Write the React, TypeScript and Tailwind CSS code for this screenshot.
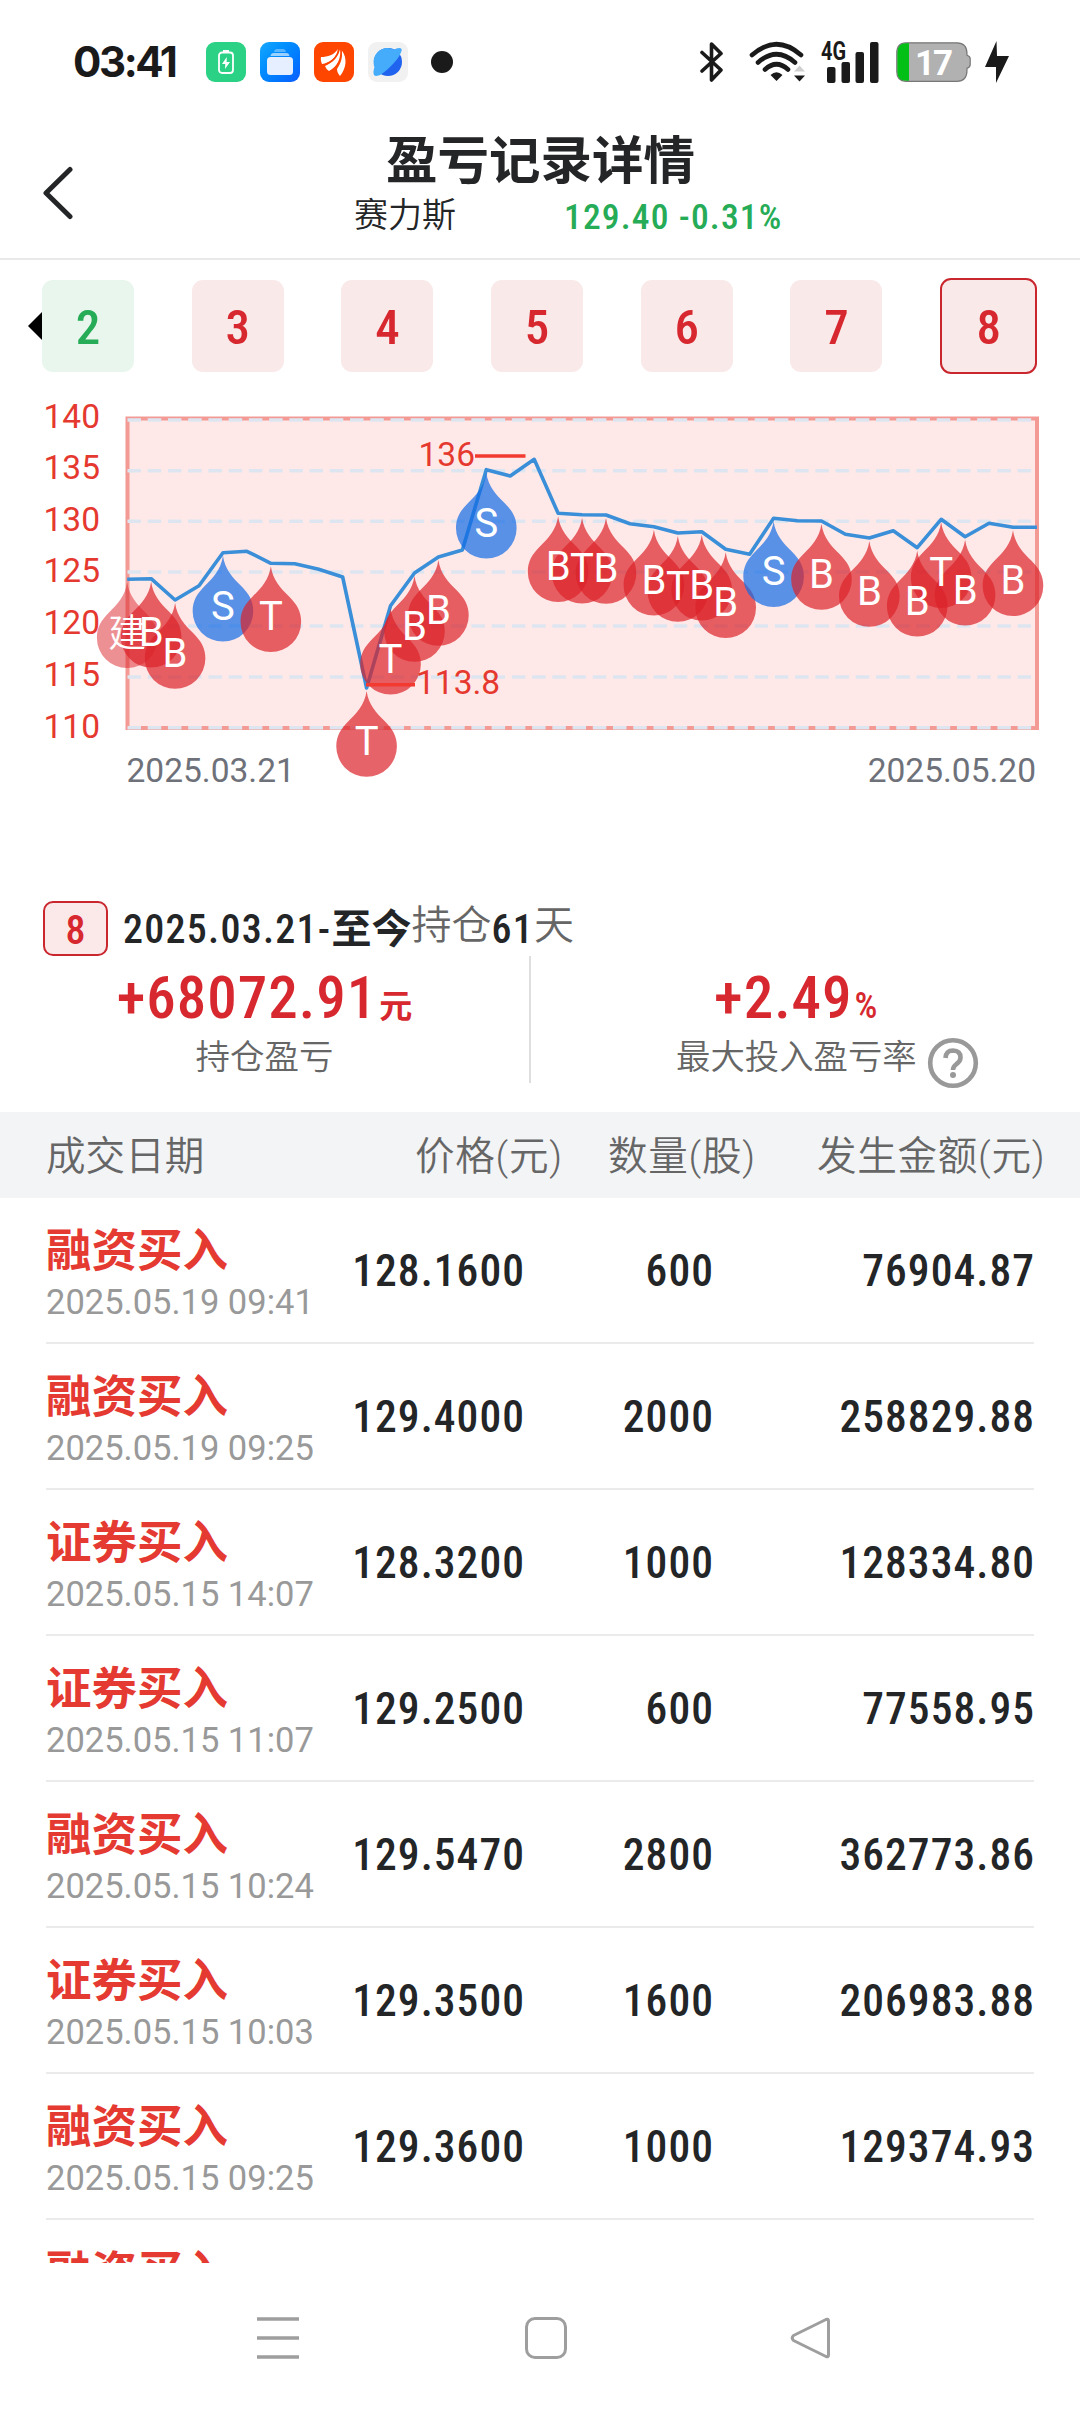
import clsx from "clsx";

type Marker = { day: number; label: string; kind: "buy" | "sell" | "open" };

const rounds = [2, 3, 4, 5, 6, 7, 8];

// Posição vertical de cada dia de negociação na curva
const curve = [
  579.3, 578.7, 600, 585.7, 552.7, 551.3, 563.3, 563.7, 569.3, 577, 688, 605.7,
  573, 557, 550, 469.7, 476, 459.3, 513.3, 514.7, 515, 523.7, 526.7, 533, 531.7,
  549.3, 554.3, 518.3, 520.7, 521, 534.3, 538, 530.7, 547.7, 519.3, 536.7,
  523.3, 527.3, 527.3,
];

const markers: Marker[] = [
  { day: 0, label: "建", kind: "open" },
  { day: 1, label: "B", kind: "buy" },
  { day: 2, label: "B", kind: "buy" },
  { day: 4, label: "S", kind: "sell" },
  { day: 6, label: "T", kind: "buy" },
  { day: 10, label: "T", kind: "buy" },
  { day: 11, label: "T", kind: "buy" },
  { day: 12, label: "B", kind: "buy" },
  { day: 13, label: "B", kind: "buy" },
  { day: 15, label: "S", kind: "sell" },
  { day: 18, label: "B", kind: "buy" },
  { day: 19, label: "T", kind: "buy" },
  { day: 20, label: "B", kind: "buy" },
  { day: 22, label: "B", kind: "buy" },
  { day: 23, label: "T", kind: "buy" },
  { day: 24, label: "B", kind: "buy" },
  { day: 25, label: "B", kind: "buy" },
  { day: 27, label: "S", kind: "sell" },
  { day: 29, label: "B", kind: "buy" },
  { day: 31, label: "B", kind: "buy" },
  { day: 33, label: "B", kind: "buy" },
  { day: 34, label: "T", kind: "buy" },
  { day: 35, label: "B", kind: "buy" },
  { day: 37, label: "B", kind: "buy" },
];

const markerFill = {
  open: "fill-[#dc2229]/50",
  buy: "fill-[#dc2229]/70",
  sell: "fill-[#136be5]/70",
};

const scale = [
  { value: 140, line: 420, base: 428 },
  { value: 135, line: 470.7, base: 479.3 },
  { value: 130, line: 521.3, base: 530.7 },
  { value: 125, line: 572, base: 582.3 },
  { value: 120, line: 626, base: 634.3 },
  { value: 115, line: 677, base: 686 },
  { value: 110, line: 727.7, base: 738 },
];

const trades = [
  { type: "融资买入", time: "2025.05.19 09:41", price: "128.1600", qty: "600", amount: "76904.87" },
  { type: "融资买入", time: "2025.05.19 09:25", price: "129.4000", qty: "2000", amount: "258829.88" },
  { type: "证券买入", time: "2025.05.15 14:07", price: "128.3200", qty: "1000", amount: "128334.80" },
  { type: "证券买入", time: "2025.05.15 11:07", price: "129.2500", qty: "600", amount: "77558.95" },
  { type: "融资买入", time: "2025.05.15 10:24", price: "129.5470", qty: "2800", amount: "362773.86" },
  { type: "证券买入", time: "2025.05.15 10:03", price: "129.3500", qty: "1600", amount: "206983.88" },
  { type: "融资买入", time: "2025.05.15 09:25", price: "129.3600", qty: "1000", amount: "129374.93" },
  { type: "融资买入", time: "", price: "", qty: "", amount: "" },
];

const dayX = (day: number) => 127.2 + day * 23.94;

function StatusBar() {
  return (
    <div className="flex h-[86px] shrink-0 items-center pt-[38px] pl-[73px] text-[#1a1a1a]">
      <span className="w-[133px] font-[Inter] text-[42px] leading-[48px] font-bold tracking-[-2.400px]">
        03:41
      </span>
      <div className="flex items-center gap-[14px]">
        <div className="flex size-10 items-center justify-center rounded-[9px] bg-[#2bd184]">
          <svg width="16" height="24" viewBox="0 0 16 24" fill="none">
            <rect x="1" y="2.5" width="14" height="20.5" rx="3" stroke="white" strokeWidth="1.8" />
            <path d="M5 0h6v2.5H5z" fill="white" />
            <path d="M8.8 7 4 14h3.3L7 19l5-7H8.6z" fill="white" />
          </svg>
        </div>
        <div className="flex size-10 items-center justify-center rounded-[9px] bg-linear-to-br from-[#16a8ff] to-[#0f5cff]">
          <svg width="28" height="28" viewBox="0 0 28 28">
            <path d="M8 4q.5-3 3-3h6q2.500 0 3 3z" fill="white" opacity=".35" />
            <path d="M4.500 8q.5-3 3-3h13q2.500 0 3 3z" fill="white" opacity=".6" />
            <rect x="1" y="9" width="26" height="18" rx="3.500" fill="#e6efff" />
          </svg>
        </div>
        <div className="flex size-10 items-center justify-center rounded-[9px] bg-[#ff4600]">
          <svg width="28" height="30" viewBox="0 0 28 30" fill="white">
            <path d="M1 10C8 10 14 8 18 2c-1 8-8 14-16 15-1-2-1.500-5-1-7z" />
            <path d="M5 19C12 16 18 11 20 2c3 8-3 18-11 22-2-1-3-3-4-5z" />
            <path d="M17 22c4-6 6-12 4.500-19C28 11 26 22 20 29c-1.500-2-3-4-3-7z" />
            <path d="M4 18C12 15 18 9 19 2M10 25c8-5 12-14 11-23" stroke="#ff4600" strokeWidth="1.500" fill="none" />
          </svg>
        </div>
        <div className="flex size-10 items-center justify-center rounded-[9px] bg-[#f1f1f2]">
          <svg width="30" height="30" viewBox="0 0 30 30">
            <circle cx="15" cy="15" r="14" fill="#2063ee" />
            <path d="M1.500 20A14 14 0 0 1 21 2.500q9-3.500 7.500 1.500C26 12 17 21 8 27.500 1 31-1 28 1.500 20z" fill="#45acfb" />
          </svg>
        </div>
      </div>
      <div className="ml-[23px] size-[22px] rounded-full bg-[#1a1a1a]" />
      <svg className="ml-[247px]" width="24" height="42" viewBox="0 0 24 42" fill="none" stroke="#1a1a1a" strokeWidth="3.600" strokeLinejoin="round" strokeLinecap="round">
        <path d="M2 11.500 21 29 11.500 39V3L21 12.500 2 30" />
      </svg>
      <svg className="ml-[25px]" width="57" height="42" viewBox="0 0 57 42" fill="none" stroke="#1a1a1a" strokeWidth="4.600" strokeLinecap="round">
        <path d="M3 14Q27.500-7.500 52 14" />
        <path d="M9 21.500Q27.500 5 46 21.500" />
        <path d="M16 28.500Q27.500 18 39 28.500" />
        <path d="M21.500 34q6-5.500 12 0l-6 6z" fill="#1a1a1a" stroke="none" />
        <path d="M45 30.500h11l-5.500-6z" fill="#cfcfcf" stroke="none" />
        <path d="M45 34.500h11l-5.500 6z" fill="#1a1a1a" stroke="none" />
      </svg>
      <svg className="ml-[15px] overflow-visible" width="60" height="44" viewBox="0 0 60 44" fill="#1a1a1a">
        <text x="0" y="19.500" textLength="25" lengthAdjust="spacingAndGlyphs" className="font-[Roboto] text-[25px] font-bold">
          4G
        </text>
        <rect x="6" y="27" width="8.500" height="16" rx="2" />
        <rect x="20.500" y="22" width="8.500" height="21" rx="2" />
        <rect x="34.500" y="12" width="8.500" height="31" rx="2" />
        <rect x="49" y="2" width="8.500" height="41" rx="2" />
      </svg>
      <svg className="ml-[15px]" width="76" height="40" viewBox="0 0 76 40">
        <path d="M10 .8h51q10 0 10 11v1.500q3.200 1 3.200 3.500v6q0 2.500-3.200 3.500v2q0 11-10 11H10q-9.200 0-9.200-9.500V11Q.8.8 10 .8z" fill="#b1b1b1" stroke="#777" strokeWidth="1.200" />
        <path d="M13 1.300v37.500h-3q-8.600 0-8.600-9V11Q1.400 1.300 10 1.300z" fill="#02c016" />
        <text x="37" y="32.500" textAnchor="middle" fill="white" className="font-[Roboto] text-[35px] font-bold tracking-[-2px]">
          17
        </text>
      </svg>
      <svg className="ml-[13px]" width="24" height="42" viewBox="0 0 24 42" fill="#1a1a1a">
        <path d="M11.500 0 0 26h11v16l13-27H12z" />
      </svg>
    </div>
  );
}

function Header() {
  return (
    <header className="flex h-[174px] shrink-0 border-b-2 border-[#e9e9e9] text-[#232527]">
      <svg className="mt-[80px] ml-[42px] shrink-0" width="32" height="54" viewBox="0 0 32 54" fill="none" stroke="#232527" strokeWidth="5" strokeLinecap="round" strokeLinejoin="round">
        <path d="M28 3.500 4 27l24 23.500" />
      </svg>
      <div className="flex flex-1 flex-col pt-[50px]">
        <h1 className="pl-[312px] text-[51.500px] leading-[52px] font-bold">盈亏记录详情</h1>
        <div className="flex items-baseline pt-[5px] pl-[280px] leading-[44px]">
          <span className="w-[210px] text-[34px] font-[350]">赛力斯</span>
          <span className="relative top-[2px] text-[35.500px] font-medium tracking-[1.150px] text-[#26ab57] [font-stretch:75%]">129.40 -0.31%</span>
        </div>
      </div>
    </header>
  );
}

function RoundTabs() {
  return (
    <div className="flex h-[132px] shrink-0 items-center pl-7">
      <svg width="14" height="28" viewBox="0 0 14 28">
        <path d="M0 14 14 0v28z" fill="black" />
      </svg>
      <div className="flex items-center gap-[57.700px]">
        {rounds.map((n) => (
          <div
            key={n}
            className={clsx(
              "flex items-center justify-center rounded-[11px] pt-[4px] text-[49px] font-medium [font-stretch:75%]",
              n === 8 ? "h-24 w-[97px] border-2 border-[#c9262d]" : "size-[92px]",
              n === 2 ? "bg-[#e8f6ed] text-[#26ab57]" : "bg-[#fae9e9] text-[#d7282f]"
            )}
          >
            {n}
          </div>
        ))}
      </div>
    </div>
  );
}

function PriceChart() {
  const points = curve.map((y, i) => `${dayX(i)},${y}`).join(" ");

  return (
    <svg className="block shrink-0" width="1080" height="488" viewBox="0 392 1080 488">
      <rect x="127.500" y="418.500" width="909.500" height="309.500" fill="#ffe9e8" stroke="#f39a94" strokeWidth="4" />
      {scale.map((s) => (
        <g key={s.value}>
          <line x1="127.500" x2="1037" y1={s.line} y2={s.line} stroke="#dde5f0" strokeWidth="3.500" strokeDasharray="13.500 6.730" />
          <text x="100" y={s.base} textAnchor="end" fill="#e5392f" className="text-[33.500px]">
            {s.value}
          </text>
        </g>
      ))}
      <polyline points={points} fill="none" stroke="#3a8fd8" strokeWidth="3.600" strokeLinejoin="round" />

      {/* Gotas de compra e venda */}
      {markers.map((m) => (
        <path
          key={m.day}
          transform={`translate(${dayX(m.day)} ${curve[m.day]})`}
          d="M0 3C2 17 10 25 18 33 26 41 30.300 48 30.300 58.500A30.300 30.300 0 0 1-30.300 58.500C-30.300 48-26 41-18 33-10 25-2 17 0 3z"
          className={markerFill[m.kind]}
        />
      ))}
      {markers.map((m) => (
        <text
          key={m.day}
          x={dayX(m.day)}
          y={curve[m.day] + 67}
          textAnchor="middle"
          fill="white"
          className={m.kind === "open" ? "text-[38px] font-[350]" : "text-[40px]"}
        >
          {m.label}
        </text>
      ))}

      {/* Máxima e mínima do período */}
      <g fill="#e5392f" className="text-[33.500px]">
        <path d="M475 456h50.500M366 684.700h49" stroke="#f23a30" strokeWidth="3.600" />
        <text x="475" y="466" textAnchor="end">136</text>
        <text x="416" y="694">113.8</text>
      </g>
      <g fill="#6e7179" className="text-[33.500px]">
        <text x="126.500" y="782">2025.03.21</text>
        <text x="1036" y="782" textAnchor="end">2025.05.20</text>
      </g>
    </svg>
  );
}

function Summary() {
  return (
    <section className="flex h-[232px] shrink-0 flex-col pt-[21px]">
      <div className="flex h-[55px] items-center pl-[43px] text-[40px] text-[#232527]">
        <div className="flex h-[55px] w-[65px] items-center justify-center rounded-[10px] border-2 border-[#c9262d] bg-[#fbe8e9] pt-[4px] font-medium text-[#d7282f] [font-stretch:75%]">
          8
        </div>
        <div className="flex items-baseline pt-[2px] pl-[15px] leading-[55px]">
          <span className="font-medium tracking-[1.250px] [font-stretch:75%]">2025.03.21-</span>
          <span className="font-bold">至今</span>
          <span className="relative -top-[4px] font-[350] text-[#666]">持仓</span>
          <span className="font-medium tracking-[1.250px] [font-stretch:75%]">61</span>
          <span className="relative -top-[4px] font-[350] text-[#666]">天</span>
        </div>
      </div>
      <div className="flex h-[127px]">
        <div className="flex w-[529px] flex-col items-center">
          <div className="flex h-[78px] items-baseline pt-[4px] font-medium text-[#d7282f]">
            <span className="text-[59px] leading-[76px] tracking-[1px] [font-stretch:75%]">+68072.91</span>
            <span className="pl-[2px] text-[33px] font-bold">元</span>
          </div>
          <span className="text-[34.500px] leading-[46px] font-[350] text-[#666]">持仓盈亏</span>
        </div>
        <div className="w-[2px] bg-[#dedede]" />
        <div className="flex flex-1 flex-col pl-[145px]">
          <div className="flex h-[78px] items-baseline pt-[4px] pl-[38px] font-medium text-[#d7282f]">
            <span className="text-[59px] leading-[76px] tracking-[1px] [font-stretch:75%]">+2.49</span>
            <span className="pl-[2px] text-[36px] [font-stretch:75%]">%</span>
          </div>
          <div className="flex text-[34.400px] leading-[46px] font-[350] text-[#666]">
            最大投入盈亏率
            <svg className="mt-[3px] ml-[10px]" width="52" height="52" viewBox="0 0 52 52" fill="none" stroke="#999" strokeWidth="4.600">
              <circle cx="26" cy="26" r="22.800" />
              <path d="M18.500 21q.5-7.500 7.500-7.500 7.500.2 7.500 7 0 3.800-4 6.500-3.500 2.500-3.500 6" />
              <circle cx="26" cy="38" r="3" fill="#999" stroke="none" />
            </svg>
          </div>
        </div>
      </div>
    </section>
  );
}

function TradeTable() {
  return (
    <>
      <div className="flex h-[86px] shrink-0 items-center bg-[#f3f4f6] pt-[3px] pl-[46px] text-[39.600px] font-[350] text-[#666]">
        <span className="w-[369px]">成交日期</span>
        <span className="w-[193px] tracking-[0.700px]">价格(元)</span>
        <span className="w-[209px] tracking-[0.700px]">数量(股)</span>
        <span className="tracking-[0.700px]">发生金额(元)</span>
      </div>
      <div className="h-[1065px] shrink-0 overflow-hidden px-[46px]">
        {trades.map((t, i) => (
          <div key={i} className="flex h-[146px] items-center border-b-2 border-[#ebebeb] text-[43.500px] font-medium tracking-[1.050px] text-[#232527]">
            <div className="flex h-full w-[276px] flex-col pt-[28px] tracking-normal">
              <span className="text-[45.500px] leading-[52px] font-bold text-[#e43a32]">{t.type}</span>
              <span className="pt-px text-[34.500px] leading-[46px] font-normal whitespace-nowrap text-[#999]">{t.time}</span>
            </div>
            <span className="w-[203px] pt-[4px] text-right [font-stretch:75%]">{t.price}</span>
            <span className="w-[189px] pt-[4px] text-right [font-stretch:75%]">{t.qty}</span>
            <span className="-mr-px flex-1 pt-[4px] text-right [font-stretch:75%]">{t.amount}</span>
          </div>
        ))}
      </div>
    </>
  );
}

function NavBar() {
  return (
    <nav className="flex h-[149px] shrink-0 items-center pl-[257px]">
      <svg width="42" height="42" viewBox="0 0 42 42" stroke="#9e9e9e" strokeWidth="3.600">
        <path d="M0 2h42M0 21h42M0 40h42" />
      </svg>
      <div className="ml-[226px] size-[42px] rounded-[10px] border-3 border-[#9e9e9e]" />
      <svg className="ml-[223px]" width="42" height="42" viewBox="0 0 42 42" fill="none" stroke="#9e9e9e" strokeWidth="3" strokeLinejoin="round">
        <path d="M36 2.500 3.500 18.500q-2.500 2.500 0 5L36 39.500q2.500 1 2.500-1.500V4q0-2.500-2.500-1.500z" />
      </svg>
    </nav>
  );
}

export default function App() {
  return (
    <div className="flex h-[2412px] w-[1080px] flex-col overflow-hidden bg-white font-[Roboto,'Noto_Sans_CJK_SC',sans-serif]">
      <StatusBar />
      <Header />
      <RoundTabs />
      <PriceChart />
      <Summary />
      <TradeTable />
      <NavBar />
    </div>
  );
}
